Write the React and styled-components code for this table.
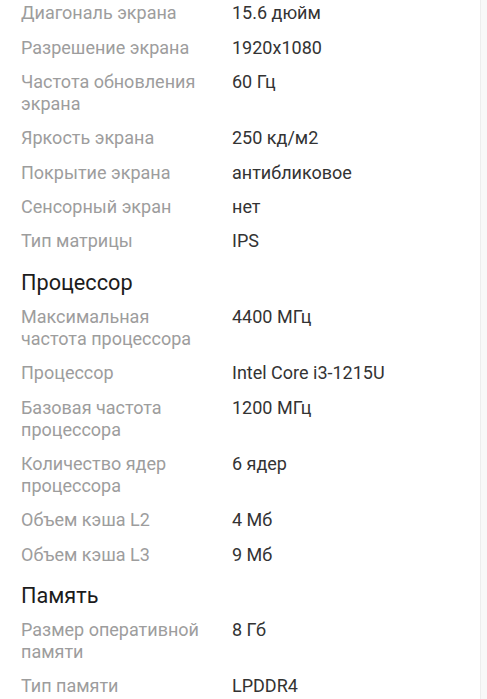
import styled, { createGlobalStyle } from 'styled-components';

const GlobalStyle = createGlobalStyle`
  html, body {
    margin: 0;
    padding: 0;
    background: #f8f8f8;
    font-family: Roboto, "Noto Sans", Arial, sans-serif;
    -webkit-font-smoothing: antialiased;
  }
`;

const Panel = styled.div`
  width: 481px;
  min-height: 699px;
  background: #fff;
  border-right: 1px solid #ededed;
  box-sizing: border-box;
  overflow: hidden;
`;

const List = styled.div`
  margin-top: -4px;
  padding: 0 0 0 21px;
`;

const SectionTitle = styled.h3`
  margin: 0;
  padding: 11px 0 4px;
  font-size: 21.7px;
  line-height: 26px;
  font-weight: 400;
  color: #1c1c1c;
`;

const Row = styled.div`
  display: grid;
  grid-template-columns: 190px 1fr;
  column-gap: 21px;
  padding: 6.2px 0;
  font-size: 18px;
  line-height: 22px;
`;

const Label = styled.div`
  color: #9d9d9d;
`;

const Value = styled.div`
  color: #333;
`;

const sections = [
  {
    title: null,
    rows: [
      ['Диагональ экрана', '15.6 дюйм'],
      ['Разрешение экрана', '1920x1080'],
      ['Частота обновления экрана', '60 Гц'],
      ['Яркость экрана', '250 кд/м2'],
      ['Покрытие экрана', 'антибликовое'],
      ['Сенсорный экран', 'нет'],
      ['Тип матрицы', 'IPS'],
    ],
  },
  {
    title: 'Процессор',
    rows: [
      ['Максимальная частота процессора', '4400 МГц'],
      ['Процессор', 'Intel Core i3-1215U'],
      ['Базовая частота процессора', '1200 МГц'],
      ['Количество ядер процессора', '6 ядер'],
      ['Объем кэша L2', '4 Мб'],
      ['Объем кэша L3', '9 Мб'],
    ],
  },
  {
    title: 'Память',
    rows: [
      ['Размер оперативной памяти', '8 Гб'],
      ['Тип памяти', 'LPDDR4'],
    ],
  },
];

export default function App() {
  return (
    <>
      <GlobalStyle />
      <Panel>
        <List>
          {sections.map((s, i) => (
            <section key={i}>
              {s.title && <SectionTitle>{s.title}</SectionTitle>}
              {s.rows.map(([k, v]) => (
                <Row key={k}>
                  <Label>{k}</Label>
                  <Value>{v}</Value>
                </Row>
              ))}
            </section>
          ))}
        </List>
      </Panel>
    </>
  );
}
